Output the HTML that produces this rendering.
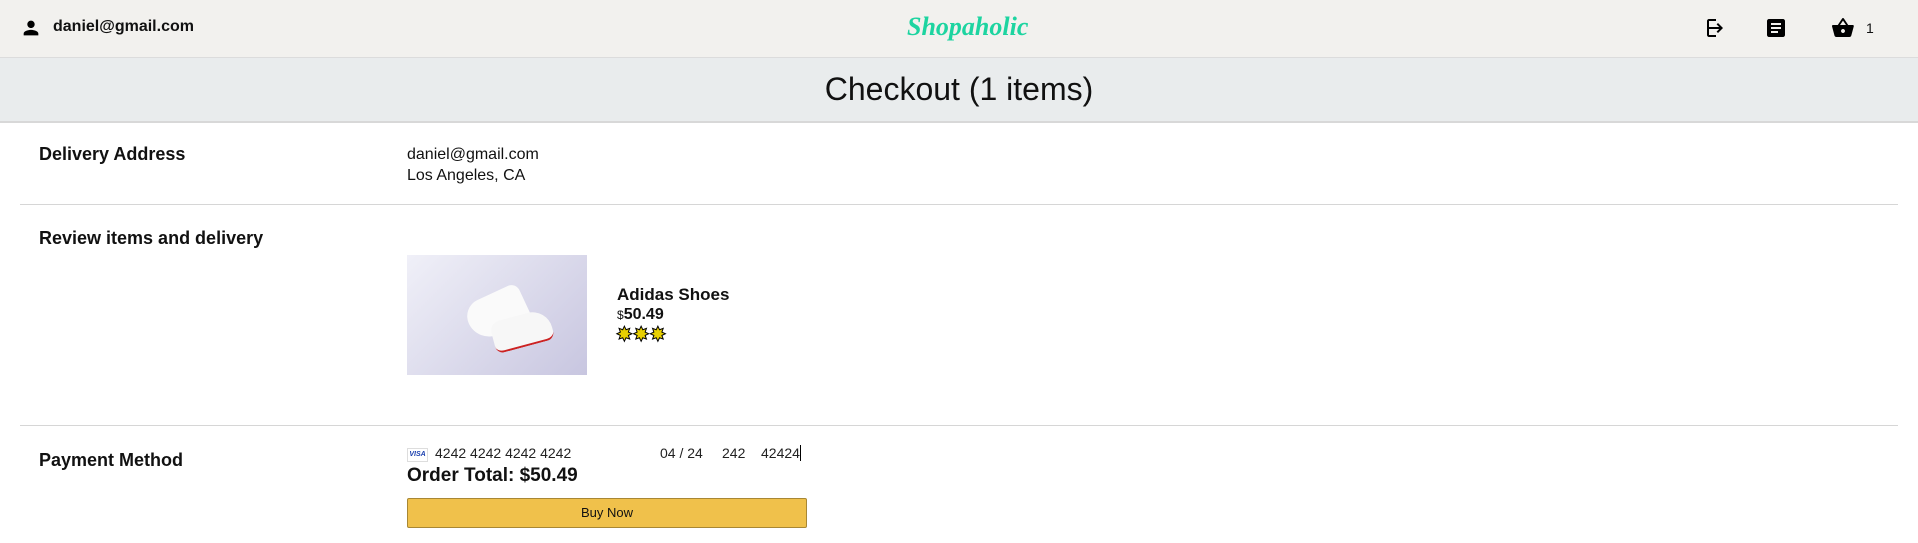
<!DOCTYPE html>
<html><head><style>
body{margin:0;width:1918px;height:543px;overflow:hidden;font-family:"Liberation Sans",sans-serif;background:#fff;position:relative;color:#111}
.a{position:absolute;white-space:nowrap}
</style></head><body>
<div class="a" style="left:0;top:0;width:1918px;height:57px;background:#f2f1ee;border-bottom:1px solid #dcdcdc"></div>
<svg class="a" style="left:20px;top:17px" width="22" height="22" viewBox="0 0 24 24"><path d="M12 12c2.2 0 4-1.8 4-4s-1.8-4-4-4-4 1.8-4 4 1.8 4 4 4zm0 2c-2.7 0-8 1.3-8 4v2h16v-2c0-2.7-5.3-4-8-4z"/></svg>
<div class="a" style="left:53px;top:18px;font-size:16px;font-weight:bold">daniel@gmail.com</div>
<div class="a" style="left:907px;top:12px;font-size:26px;font-weight:bold;font-style:italic;color:#1dd4a0;font-family:'Liberation Serif',serif">Shopaholic</div>
<svg class="a" style="left:1704px;top:16px" width="24" height="24" viewBox="0 0 24 24"><path d="M10 17l1.4-1.4L8.8 13H19v-2H8.8l2.6-2.6L10 7l-5 5 5 5z" transform="translate(24,0) scale(-1,1)"/><path d="M5 5h7V3H5c-1.1 0-2 .9-2 2v14c0 1.1.9 2 2 2h7v-2H5V5z"/></svg>
<svg class="a" style="left:1764px;top:16px" width="24" height="24" viewBox="0 0 24 24"><path d="M19 3H5c-1.1 0-2 .9-2 2v14c0 1.1.9 2 2 2h14c1.1 0 2-.9 2-2V5c0-1.1-.9-2-2-2zm-5 14H7v-2h7v2zm3-4H7v-2h10v2zm0-4H7V7h10v2z"/></svg>
<svg class="a" style="left:1831px;top:16px" width="24" height="24" viewBox="0 0 24 24"><path d="M17.2 9l-4.4-6.6c-.2-.3-.5-.4-.8-.4s-.6.1-.8.4L6.8 9H2c-.6 0-1 .4-1 1v.3l2.5 9.3c.2.8 1 1.4 1.9 1.4h13c.9 0 1.7-.6 1.9-1.5l2.5-9.3V10c0-.6-.4-1-1-1h-4.6zM9 9l3-4.4L15 9H9zm3 8c-1.1 0-2-.9-2-2s.9-2 2-2 2 .9 2 2-.9 2-2 2z"/></svg>
<div class="a" style="left:1866px;top:20px;font-size:14px">1</div>
<div class="a" style="left:0;top:58px;width:1918px;height:63px;background:#e9eced;border-bottom:2px solid #d8d8d8"></div>
<div class="a" style="left:0;top:71px;width:1918px;text-align:center;font-size:32px">Checkout (1 items)</div>
<div class="a" style="left:39px;top:144px;font-size:18px;font-weight:bold">Delivery Address</div>
<div class="a" style="left:407px;top:144px;font-size:16px;line-height:21px">daniel@gmail.com<br>Los Angeles, CA</div>
<div class="a" style="left:20px;top:204px;width:1878px;height:1px;background:#d6d6d6"></div>
<div class="a" style="left:39px;top:228px;font-size:18px;font-weight:bold">Review items and delivery</div>
<div class="a" style="left:407px;top:255px;width:180px;height:120px;background:linear-gradient(135deg,#f0f0f8,#c8c6e0)"><div style="position:absolute;left:60px;top:38px;width:60px;height:40px;background:#fafafa;border-radius:20px 10px 8px 25px;transform:rotate(-25deg)"></div><div style="position:absolute;left:85px;top:60px;width:60px;height:30px;background:#f7f7f7;border-radius:10px 20px 8px 8px;transform:rotate(-15deg);border-bottom:2px solid #c22"></div></div>
<div class="a" style="left:617px;top:285px;font-size:17px;font-weight:bold">Adidas Shoes</div>
<div class="a" style="left:617px;top:306px;font-size:16px;font-weight:bold"><span style="font-size:12px;font-weight:normal">$</span>50.49</div>
<div class="a" style="left:616px;top:324px;font-size:20px;line-height:22px;color:#e8d000;-webkit-text-stroke:1px #000;letter-spacing:0px">✸✸✸</div>
<div class="a" style="left:20px;top:425px;width:1878px;height:1px;background:#d6d6d6"></div>
<div class="a" style="left:39px;top:450px;font-size:18px;font-weight:bold">Payment Method</div>
<div class="a" style="left:407px;top:448px;width:19px;height:12px;border:1px solid #ddd;font-size:7px;font-weight:bold;color:#1a3fae;text-align:center;line-height:12px;font-style:italic">VISA</div>
<div class="a" style="left:435px;top:445px;font-size:14px;color:#222">4242 4242 4242 4242</div>
<div class="a" style="left:660px;top:445px;font-size:14px;color:#222">04 / 24</div>
<div class="a" style="left:722px;top:445px;font-size:14px;color:#222">242</div>
<div class="a" style="left:761px;top:445px;font-size:14px;color:#222;border-right:1px solid #000;padding-right:0">42424</div>
<div class="a" style="left:407px;top:465px;font-size:19px;font-weight:bold">Order Total: $50.49</div>
<div class="a" style="left:407px;top:498px;width:398px;height:28px;background:#f0c14b;border:1px solid #a88734;border-radius:2px;text-align:center;line-height:28px;font-size:13px;color:#111">Buy Now</div>
</body></html>
